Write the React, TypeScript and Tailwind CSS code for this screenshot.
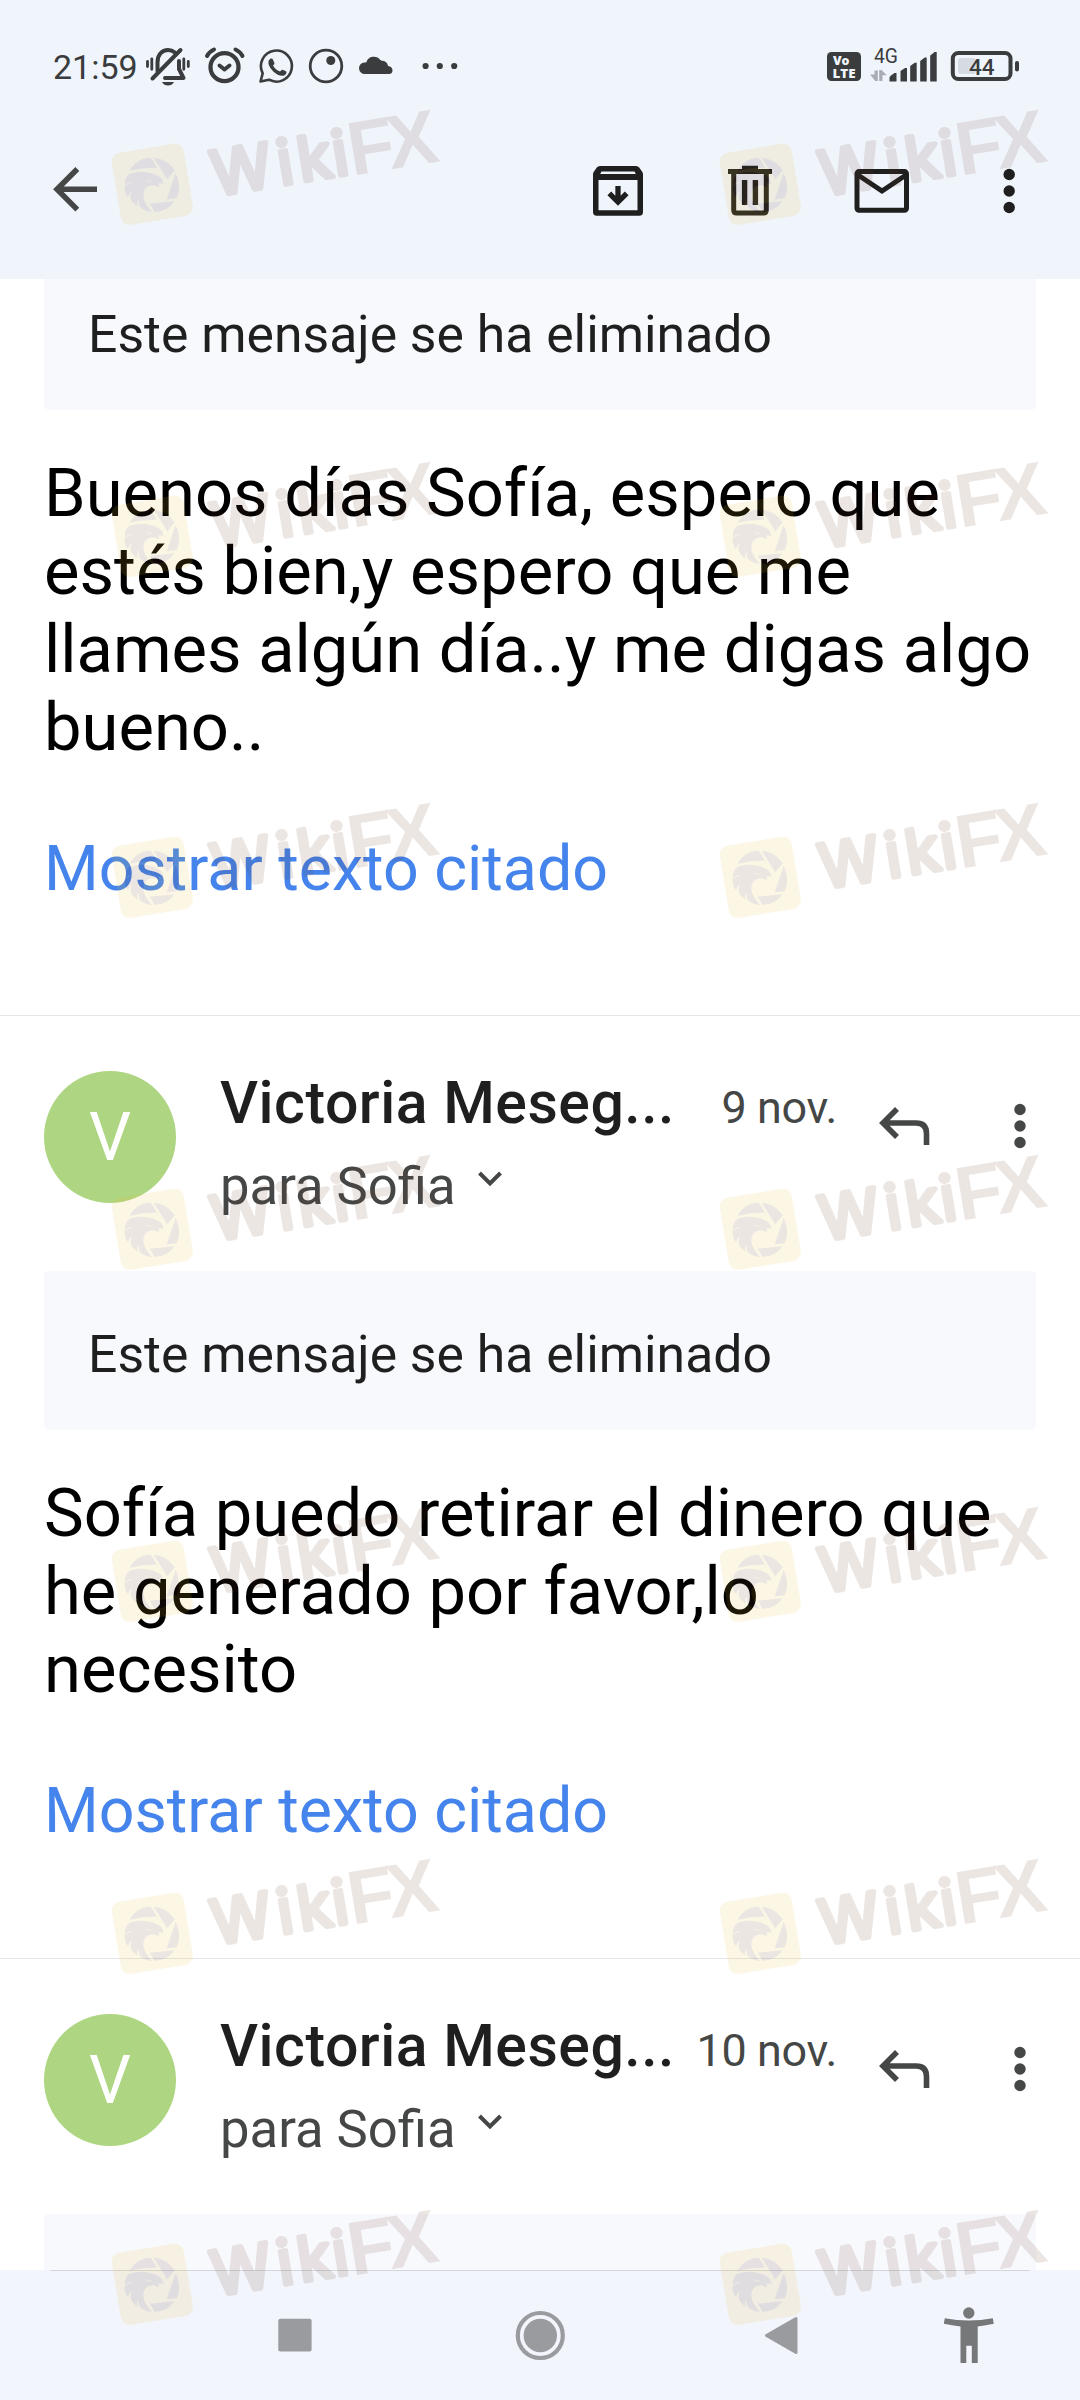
import React from 'react';

interface Message {
  id: number;
  date: string;
  lines: string[];
}

const SENDER = 'Victoria Meseg...';
const DELETED_NOTICE = 'Este mensaje se ha eliminado';
const QUOTED_TEXT = 'Mostrar texto citado';

const MESSAGES: Message[] = [
  { id: 1, date: '9 nov.', lines: ['Sofía puedo retirar el dinero que', 'he generado por favor,lo', 'necesito'] },
  { id: 2, date: '10 nov.', lines: [] },
];

const WATERMARK_ROWS = [138, 490, 831, 1183, 1535, 1887, 2238];

const StatusBar: React.FC = () => (
  <div className="flex h-[132px] items-center pl-[53px] text-[#3a3c3e]">
    <span className="w-[91px] text-[34px] leading-[40px] whitespace-nowrap mt-[2px]">21:59</span>
    {/* muted bell */}
    <svg className="h-[44px] w-[48px]" viewBox="144 44 48 44" fill="none" stroke="currentColor" strokeLinecap="round">
      <path d="M157.500 71V62.500C157.500 54.500 162 50 168 50q4 0 6.500 2.200" strokeWidth="4" />
      <path d="M179 61v8l4.500 9H165" strokeWidth="4" strokeLinejoin="round" />
      <path d="M152.500 78.500 180.500 50" strokeWidth="4" />
      <path d="M147.500 61.500v5M151.800 58.800v10.500M183.800 58.800v10.500M188.300 61.500v5" strokeWidth="2.800" />
      <path d="M162 82h12q-2 3.500-6 3.500t-6-3.500z" fill="currentColor" stroke="none" />
    </svg>
    {/* alarm */}
    <svg className="ml-[10px] h-[44px] w-[45px]" viewBox="202 44 45 44" fill="none" stroke="currentColor" strokeLinecap="round" strokeLinejoin="round">
      <circle cx="224.500" cy="67.200" r="14" strokeWidth="4.300" />
      <path d="m219.500 65.500 5 4 5-4" strokeWidth="4" />
      <path d="M207 56q2-4 7-6.500M242.500 56q-2-4-7-6.500" strokeWidth="4" />
    </svg>
    {/* whatsapp */}
    <svg className="ml-[10px] h-[44px] w-[38px]" viewBox="257 44 38 44" fill="none" stroke="currentColor">
      <path d="M260.500 81.500l2.200-8.200A15.500 15.500 0 1 1 269 79.700z" strokeWidth="2.600" strokeLinejoin="round" />
      <path d="M269.500 59.500c1.500-1.700 2.800-1.200 3.500.3l1.400 3.100c.4 1-.9 2-1.400 2.700 1.600 3 4 4.900 7 5.900.9-.7 1.700-2.200 2.700-1.800l3.200 1.600c1.200.6.600 3-1.300 3.900-3 1.400-7.500-.2-11.300-3.800-4.200-4-6.300-9.200-3.800-11.900z" fill="currentColor" stroke="none" />
    </svg>
    <svg className="ml-[12px] h-[44px] w-[38px]" viewBox="307 44 38 44">
      <circle cx="326" cy="66" r="15.800" fill="none" stroke="currentColor" strokeWidth="2.800" />
      <circle cx="330.800" cy="60.500" r="4.500" fill="currentColor" />
    </svg>
    {/* cloud */}
    <svg className="ml-[12px] h-[44px] w-[38px]" viewBox="357 44 38 44" fill="currentColor">
      <path d="M365 74a5.500 5.500 0 0 1-.5-11.500q1.500 0 1.800-.3a8 8 0 0 1 14-2.200q1 1 2.500.7 4 .3 5.300 5.300 4.400.8 4.400 4.500 0 3.300-3.500 3.500z" />
    </svg>
    <svg className="ml-[25px] h-[44px] w-[40px]" viewBox="420 44 40 44" fill="currentColor">
      <circle cx="425.600" cy="66" r="3.100" />
      <circle cx="439.800" cy="66" r="3.100" />
      <circle cx="454.200" cy="66" r="3.100" />
    </svg>

    <div className="ml-auto mr-[60px] flex items-center">
      <svg className="h-[44px] w-[34px]" viewBox="827 44 34 44">
        <rect x="827" y="52" width="34" height="29" rx="4.500" fill="currentColor" />
        <g fill="#f0f5fc" fontFamily="Open Sans" fontWeight="800" fontSize="12.500">
          <text x="833" y="65.200" textLength="16.500" lengthAdjust="spacingAndGlyphs">Vo</text>
          <text x="832.500" y="77.800" textLength="23" lengthAdjust="spacingAndGlyphs">LTE</text>
        </g>
      </svg>
      <svg className="ml-[8px] h-[44px] w-[70px]" viewBox="869 44 70 44" fill="currentColor">
        <text x="874" y="63" fontSize="20" fontFamily="Roboto" textLength="24" lengthAdjust="spacingAndGlyphs">4G</text>
        <path d="M874.500 70.500h3.300V81h-2.500l-5.300-6.500h4.500zM879.200 81V70h2.300l5.300 5.300h-4.300V81z" fill="#a9adb3" />
        <path d="M889.500 81.500v-4q0-1.500 5-4.500h2v8.500zM900.500 81.500V71l4.500-3h2v13.500zM910.200 81.500V66l4.500-3.300h2v18.800zM920.200 81.500V61l4.500-3.500h2v24zM930.200 81.500V55.500l4.500-3.500h2v29.500z" />
      </svg>
      <svg className="ml-[9px] h-[44px] w-[72px]" viewBox="948 44 72 44">
        <rect x="952.800" y="53" width="57.700" height="26" rx="5.500" fill="none" stroke="currentColor" strokeWidth="4" />
        <rect x="958" y="58" width="18" height="16" rx="3" fill="#d6dae3" />
        <rect x="1015" y="61" width="4" height="10.500" rx="2" fill="currentColor" />
        <text x="969" y="75" fontSize="22.500" fontWeight="500" fontFamily="Roboto" fill="currentColor">44</text>
      </svg>
    </div>
  </div>
);

const Toolbar: React.FC = () => (
  <div className="flex h-[116px] items-center pl-[50px] text-[#1f1f1f]">
    <svg className="h-[60px] w-[50px] text-[#444746]" viewBox="50 160 50 60" fill="none" stroke="currentColor" strokeWidth="5.500">
      <path d="M97 189.300H57M77.300 169 57 189.300l20.300 20.300" />
    </svg>
    {/* archive */}
    <svg className="ml-[490px] h-[60px] w-[56px]" viewBox="590 160 56 60">
      <path fill="currentColor" fillRule="evenodd" d="M600 166h36q2 0 3.200 1.500l3 4.300q.8 1 .8 2.500V212q0 3.700-3.700 3.700h-42.600Q593 215.700 593 212v-37.700q0-1.500.8-2.500l3-4.300Q598 166 600 166zM601.500 171.500l-1.300 2.500h35.600l-1.300-2.500zM598.500 180v30.200h39V180z" />
      <path d="M618 186v14M609.300 193.300l8.700 8.700 8.700-8.700" fill="none" stroke="currentColor" strokeWidth="5.300" />
    </svg>
    {/* delete */}
    <svg className="ml-[76px] h-[60px] w-[56px]" viewBox="722 160 56 60" fill="none" stroke="currentColor">
      <path d="M728 171.500h44" strokeWidth="5" />
      <path d="M742 168h16" strokeWidth="4.500" />
      <path d="M733.700 173v37q0 3 3 3h26.600q3 0 3-3v-37" strokeWidth="5" />
      <path d="M744.600 180v25M755.400 180v25" strokeWidth="5.400" />
    </svg>
    {/* mark unread */}
    <svg className="ml-[72px] h-[60px] w-[64px]" viewBox="850 160 64 60" fill="none" stroke="currentColor" strokeWidth="5">
      <rect x="857" y="171.600" width="49.500" height="38.700" rx="2" />
      <path d="M858 175l24 16 24-16" />
    </svg>
    <svg className="ml-[84px] h-[60px] w-[22px]" viewBox="997.500 160 22 60" fill="currentColor">
      <circle cx="1008.700" cy="174.500" r="5.700" />
      <circle cx="1008.700" cy="191" r="5.700" />
      <circle cx="1008.700" cy="207.500" r="5.700" />
    </svg>
  </div>
);

const DeletedNotice: React.FC<{ collapsed?: boolean }> = ({ collapsed = false }) => (
  <div className="mx-[44px] h-[159px] shrink-0 rounded-[5px] bg-[#f8f9fd] pt-[54px] pl-[44px]">
    {!collapsed && <p className="text-[51.7px] leading-[60px] whitespace-nowrap text-[#1f1f1f]">{DELETED_NOTICE}</p>}
  </div>
);

const MessageBody: React.FC<{ lines: string[] }> = ({ lines }) => (
  <div className="px-[44px] pt-[44px] pb-[109px]">
    <div className="text-[66.9px] leading-[78px] whitespace-nowrap text-black">
      {lines.map((line) => (
        <p key={line}>{line}</p>
      ))}
    </div>
    <a className="mt-[66px] block text-[62.7px] leading-[74px] whitespace-nowrap text-[#4484ec]">{QUOTED_TEXT}</a>
  </div>
);

const MessageHeader: React.FC<{ date: string }> = ({ date }) => (
  <div className="flex h-[256px] shrink-0 items-start border-t border-[#e4e6e8] pt-[52px] pl-[44px] text-[#444746]">
    <div className="mt-[3px] flex size-[132px] items-center justify-center rounded-full bg-[#aed581] pt-[2px] text-[66px] leading-none text-white">
      V
    </div>
    <div className="ml-[44px]">
      <p className="text-[59px] leading-[70px] font-medium tracking-[0.5px] whitespace-nowrap text-[#1f1f1f]">{SENDER}</p>
      <div className="mt-[17px] flex items-center">
        <span className="text-[52.6px] leading-[62px] whitespace-nowrap">para Sofia</span>
        <svg className="mb-[14px] ml-[18px] h-[20px] w-[32px]" viewBox="0 0 32 20" fill="none" stroke="currentColor" strokeWidth="4">
          <path d="m5.500 4 10.500 10.500L26.500 4" />
        </svg>
      </div>
    </div>
    <span className="mt-[5px] ml-auto text-[44.9px] leading-[70px] tracking-[-0.35px] whitespace-nowrap">{date}</span>
    <svg className="mt-[28px] ml-[38px] h-[60px] w-[60px]" viewBox="875 1096 60 60" fill="none" stroke="currentColor" strokeWidth="5.600">
      <path d="M926.500 1145v-11.500q0-10.500-10.500-10.500h-32M897 1109l-14 14 14 14" />
    </svg>
    <svg className="mt-[28px] mr-[49px] ml-[74px] h-[60px] w-[22px]" viewBox="1008.700 1096 22 60" fill="currentColor">
      <circle cx="1019.700" cy="1109.500" r="5.700" />
      <circle cx="1019.700" cy="1126" r="5.700" />
      <circle cx="1019.700" cy="1142.500" r="5.700" />
    </svg>
  </div>
);

const NavBar: React.FC = () => (
  <div className="flex h-[130px] bg-[#f2f5fc] text-[#9a9b9f]">
    <svg className="ml-[270px] h-[130px] w-[50px]" viewBox="270 2270 50 130">
      <rect x="278.300" y="2318.700" width="33.300" height="32.700" rx="2" fill="currentColor" />
    </svg>
    <svg className="ml-[190px] h-[130px] w-[60px]" viewBox="510 2270 60 130">
      <circle cx="540.300" cy="2335.500" r="22.500" fill="none" stroke="currentColor" strokeWidth="4.200" />
      <circle cx="540.300" cy="2335.500" r="16.700" fill="currentColor" />
    </svg>
    <svg className="ml-[190px] h-[130px] w-[50px]" viewBox="760 2270 50 130">
      <path d="M766.500 2335.500 796 2318.500v34z" fill="currentColor" stroke="currentColor" strokeWidth="3" strokeLinejoin="round" />
    </svg>
    <svg className="ml-[130px] h-[130px] w-[60px] text-[#757779]" viewBox="940 2270 60 130" fill="currentColor">
      <circle cx="968.800" cy="2313" r="5.700" />
      <path d="M944.800 2318.300q24 4.500 48 0l1 5.500q-8 1.800-16.100 2.700v36.500h-5.900v-17.300h-5.500V2363h-5.800v-36.500q-8.500-.9-16.700-2.700z" />
    </svg>
  </div>
);

const Watermark: React.FC = () => (
  <svg className="h-[92px] w-[345px] shrink-0 overflow-visible opacity-[0.12]" viewBox="0 0 345 92">
    <g transform="translate(46.300 46.300) rotate(-9.300)">
      <rect x="-36.500" y="-36.500" width="73" height="73" rx="9" fill="#eebc2f" />
      <g fill="#693726" stroke="#693726" fontFamily="Inter">
        <text x="60 127 147.500 182.500" y="21.500" fontSize="61" strokeWidth="5" strokeLinejoin="round" strokeLinecap="round">Wiki</text>
        <text x="198.500 238" y="23.800" fontSize="76" fontWeight="700" fontFamily="Liberation Sans" stroke="none">FX</text>
      </g>
    </g>
    {/* aperture with the eagle head inside */}
    <g transform="scale(0.3333)" fill="#693726">
      <path d="M71 98Q92 60 135 59L153 89Q112 88 71 98z" />
      <path d="M143 59Q184 63 206 97L184 124z" />
      <path d="M209 105Q228 144 212 181L182 184z" />
      <path d="M205 190Q184 221 146 222L131 197z" />
      <path d="M58 128Q62 106 82 104 108 98 132 105 152 109 163 118 173 127 172 139 163 134 155 137 162 141 157 148 150 142 140 142 120 143 114 160 108 178 120 198 130 213 138 222 116 221 102 207 96 196 98 184 90 194 95 206 76 194 73 178 73 170 78 160 68 166 66 178 53 160 56 144 66 138 80 132 66 132 57 142 56 135 58 128z" />
      <path d="M118 123q10 8 20 3-2 5-8 5-8-1-12-8z" fill="#eebc2f" />
    </g>
  </svg>
);

const App: React.FC = () => {
  return (
    <div className="relative flex h-[2400px] w-[1080px] flex-col overflow-hidden bg-white font-[Roboto,sans-serif]">
      <header className="h-[279px] shrink-0 bg-[#f0f5fc]">
        <StatusBar />
        <Toolbar />
      </header>

      <main className="flex h-[1991px] shrink-0 flex-col overflow-hidden">
        <div className="-mt-[28px] shrink-0">
          <DeletedNotice />
          <MessageBody lines={['Buenos días Sofía, espero que', 'estés bien,y espero que me', 'llames algún día..y me digas algo', 'bueno..']} />
        </div>
        {MESSAGES.map((message) => (
          <article key={message.id} className="mb-px shrink-0">
            <MessageHeader date={message.date} />
            <DeletedNotice collapsed={message.lines.length === 0} />
            {message.lines.length > 0 && <MessageBody lines={message.lines} />}
          </article>
        ))}
      </main>

      <NavBar />
      <div className="absolute top-[2270px] right-[50px] left-[50px] h-px bg-[#d3d6dc]" />

      {/* watermark layer over the whole screen */}
      <div className="pointer-events-none absolute inset-0">
        {WATERMARK_ROWS.map((top) => (
          <div key={top} className="absolute left-[106px] flex gap-[263px]" style={{ top }}>
            <Watermark />
            <Watermark />
          </div>
        ))}
      </div>
    </div>
  );
};

export default App;
